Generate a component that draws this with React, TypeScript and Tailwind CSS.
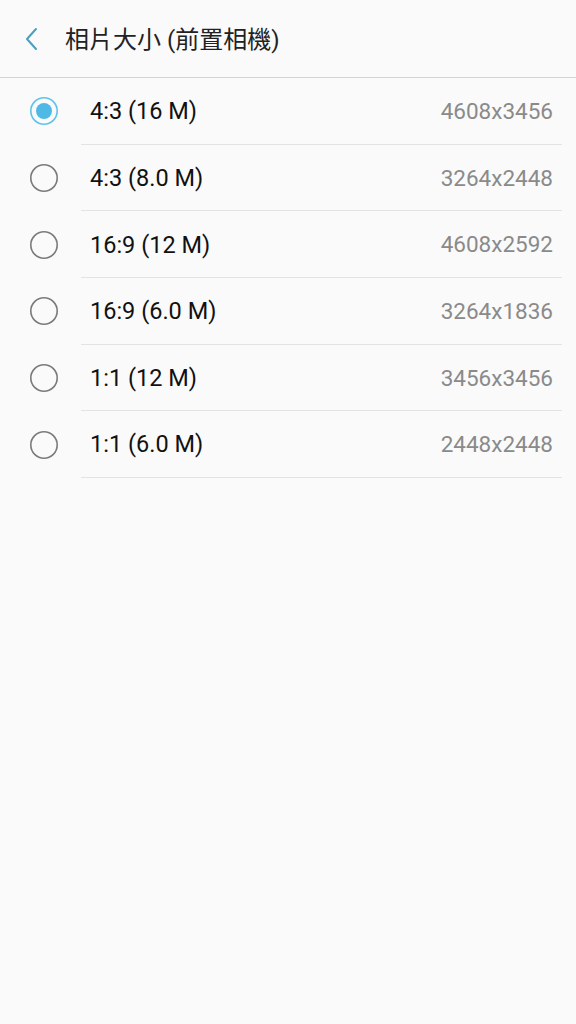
const options = [
  { label: '4:3 (16 M)', size: '4608x3456' },
  { label: '4:3 (8.0 M)', size: '3264x2448' },
  { label: '16:9 (12 M)', size: '4608x2592' },
  { label: '16:9 (6.0 M)', size: '3264x1836' },
  { label: '1:1 (12 M)', size: '3456x3456' },
  { label: '1:1 (6.0 M)', size: '2448x2448' },
];

function Radio({ checked }: { checked: boolean }) {
  return (
    <svg width="30" height="30" viewBox="0 0 30 30">
      <circle cx="15" cy="15" r="13.2" fill="none" stroke={checked ? '#5ec3ea' : '#7a7a7a'} strokeWidth="1.6" />
      {checked && <circle cx="15" cy="15" r="8" fill="#4fb9e6" />}
    </svg>
  );
}

export default function App() {
  return (
    <div className="w-[576px] h-[1024px] bg-[#fafafa]" style={{ fontFamily: 'Roboto, "Noto Sans CJK TC", sans-serif' }}>
      <div className="h-[78px] flex items-center border-b border-[#d4d4d4]">
        <svg className="ml-[22px]" width="18" height="24" viewBox="0 0 18 24">
          <path d="M14 2 L5 12 L14 22" fill="none" stroke="#4a9fc2" strokeWidth="2" strokeLinecap="round" strokeLinejoin="round" />
        </svg>
        <span className="ml-[25px] text-[24px] text-[#222] mt-[2px]">相片大小 (前置相機)</span>
      </div>
      <div>
        {options.map((o, i) => (
          <div key={o.label} className="h-[66.67px] flex items-center pl-[29px]">
            <Radio checked={i === 0} />
            <div className="ml-[22px] mr-[14px] flex-1 h-full flex items-center justify-between border-b border-[#e3e3e3] pl-[9px] pr-[9px]">
              <span className="text-[23.5px] text-[#111] mt-[2px]">{o.label}</span>
              <span className="text-[22.5px] text-[#8a8a8a] mt-[2px]">{o.size}</span>
            </div>
          </div>
        ))}
      </div>
    </div>
  );
}
